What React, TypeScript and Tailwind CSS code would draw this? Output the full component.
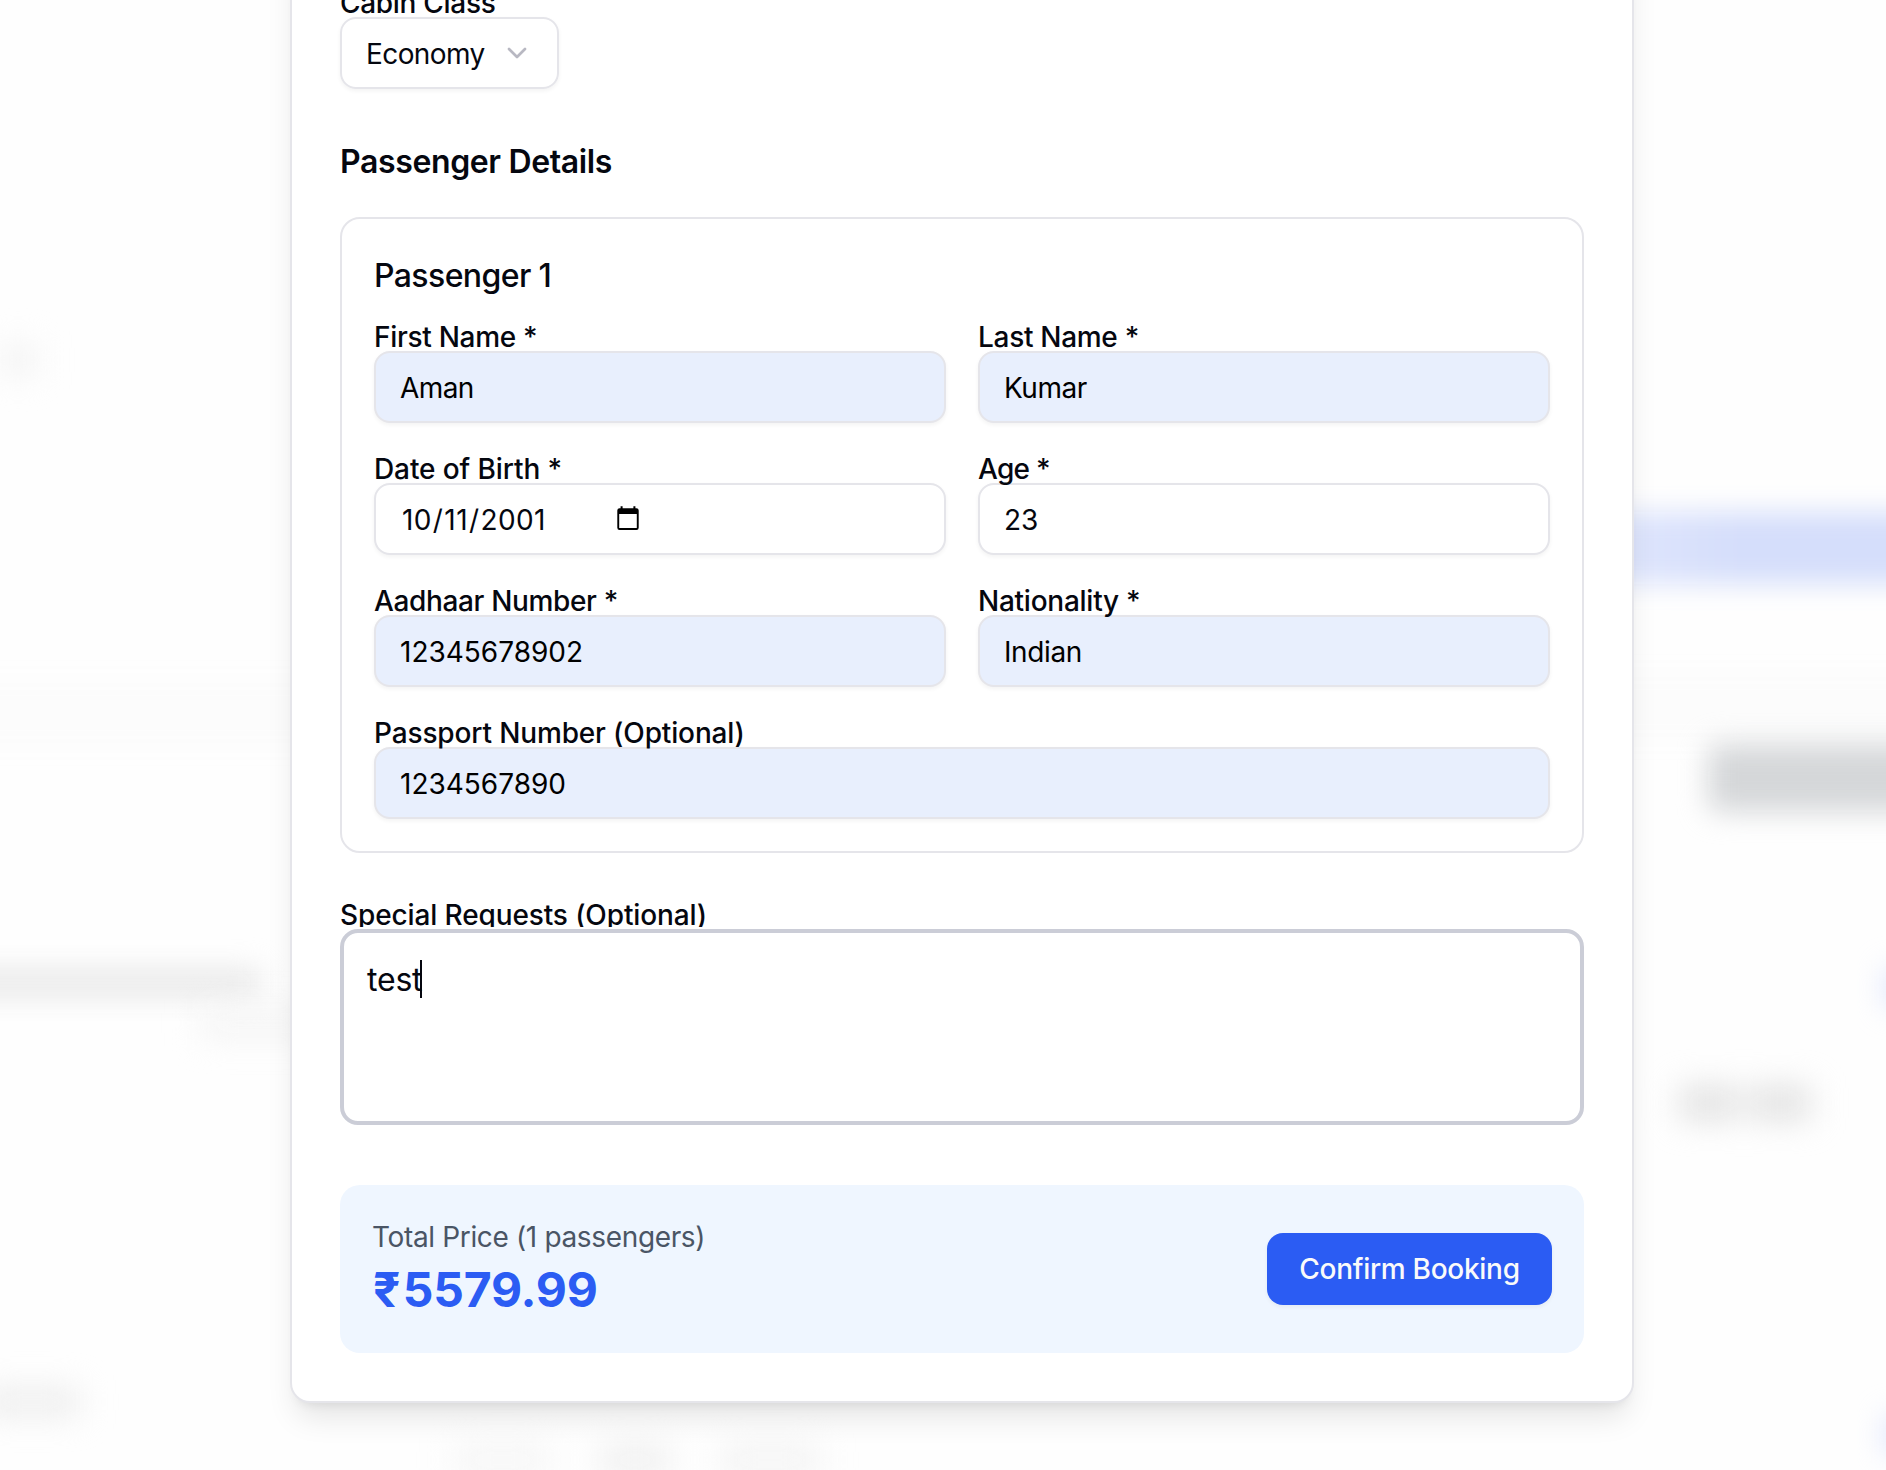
import { ChevronDown } from "lucide-react";
import type { ReactNode } from "react";

function Label({ tracking = "tracking-[-0.3px]", children }: { tracking?: string; children: ReactNode }) {
  return <div className={"h-7 whitespace-nowrap text-[28px] leading-7 font-medium " + tracking}>{children}</div>;
}

function Field({
  label,
  labelTracking,
  tracking = "",
  filled = false,
  wide = false,
  children,
}: {
  label: string;
  labelTracking?: string;
  tracking?: string;
  filled?: boolean;
  wide?: boolean;
  children: ReactNode;
}) {
  return (
    <div className={wide ? "col-span-2" : ""}>
      <Label tracking={labelTracking}>{label}</Label>
      <div
        className={
          "flex h-18 items-center rounded-2xl border-2 border-[#e5e5ea] px-6 pt-0.5 text-[28px] leading-10 shadow-[0_2px_4px_rgb(0_0_0/0.05)] " +
          (filled ? "bg-[#e8effd] text-black " : "bg-white ") +
          tracking
        }
      >
        {children}
      </div>
    </div>
  );
}

function CalendarIcon() {
  return (
    <svg viewBox="0 0 24 24" className="-mt-1 h-6 w-6" fill="none">
      <path
        fill="#000"
        fillRule="evenodd"
        d="M4.600 .3h2v1.900h10.800V.3h2v1.900h1.100a2.200 2.200 0 0 1 2.200 2.200v17.400a2.200 2.200 0 0 1-2.200 2.200H3.500a2.200 2.200 0 0 1-2.200-2.200V4.400a2.200 2.200 0 0 1 2.200-2.200h1.100zM3.200 8v14h17.600V8z"
      />
    </svg>
  );
}

/* Out-of-focus page behind the dialog */
function Backdrop() {
  return (
    <div aria-hidden className="absolute inset-0 flex justify-between overflow-hidden bg-[#fefefe]">
      <div className="w-[900px]">
        <div className="mt-[346px] h-7 w-9 bg-[#f2f2f2] blur-[16px]" />
        <div className="-ml-10 mt-[304px] h-[70px] w-[440px] bg-[#fcfcfc] blur-[8px]" />
        <div className="-ml-10 mt-[222px] h-[26px] w-[300px] bg-[#e7e7e7] blur-[14px]" />
        <div className="ml-[200px] mt-[14px] h-[26px] w-[120px] bg-[#f4f4f4] blur-[16px]" />
        <div className="-ml-4 mt-[354px] h-6 w-[96px] bg-[#ebebeb] blur-[16px]" />
        <div className="ml-[455px] mt-[34px] flex gap-[50px] blur-[16px]">
          <div className="h-6 w-[95px] bg-[#f4f4f4]" />
          <div className="h-6 w-[70px] bg-[#ececec]" />
          <div className="h-6 w-[100px] bg-[#f1f1f1]" />
        </div>
      </div>
      <div className="w-[286px]">
        <div className="-ml-10 mt-[512px] h-[72px] w-[400px] bg-gradient-to-r from-[#dde4fc] from-20% to-[#d5defb] to-45% blur-[13px]" />
        <div className="-ml-10 mt-[88px] h-[70px] w-[400px] bg-[#fcfcfc] blur-[8px]" />
        <div className="ml-[108px] mt-0.5 h-[68px] w-[240px] rounded-xl bg-[#d5d7d9] blur-[14px]" />
        <div className="ml-[286px] mt-[158px] h-[36px] w-[40px] bg-[#dbe2fc] blur-[15px]" />
        <div className="ml-[80px] mt-[81px] flex gap-3 blur-[16px]">
          <div className="h-[32px] w-[58px] bg-[#e0e0e0]" />
          <div className="h-[32px] w-[60px] bg-[#e0e0e0]" />
        </div>
        <div className="ml-[286px] mt-[298px] h-[36px] w-[40px] bg-[#dbe2fc] blur-[15px]" />
      </div>
    </div>
  );
}

export default function App() {
  return (
    <div className="relative h-[1470px] w-[1886px] overflow-hidden bg-white font-['Inter',sans-serif] text-[#05070f]">
      <Backdrop />
      <main className="relative -mt-[60px] ml-[290px] h-[1463px] w-[1344px] rounded-[20px] border-2 border-[#e5e5ea] bg-white px-12 pt-[47px] shadow-[0_20px_30px_-6px_rgb(0_0_0/0.1),0_8px_12px_-8px_rgb(0_0_0/0.1)]">
        <Label>Cabin Class</Label>
        <div className="flex h-18 w-[219px] items-center justify-between rounded-2xl border-2 border-[#e5e5ea] px-6 text-[28px] leading-10 shadow-[0_2px_4px_rgb(0_0_0/0.05)]">
          <span className="pt-0.5 tracking-[-0.6px]">Economy</span>
          <ChevronDown size={32} strokeWidth={2} className="text-[#b8b8c2]" />
        </div>

        <h3 className="mt-12 pt-px text-[32px] leading-[48px] font-semibold tracking-[-0.37px]">Passenger Details</h3>

        <section className="mt-[31px] rounded-[20px] border-2 border-[#e5e5ea] p-8">
          <h4 className="mb-[23px] pt-px text-[32px] leading-[48px] font-medium tracking-[-0.6px]">Passenger 1</h4>
          <div className="grid grid-cols-2 gap-8">
            <Field label="First Name *" filled tracking="tracking-[-0.6px]">Aman</Field>
            <Field label="Last Name *" filled tracking="tracking-[-0.5px]">Kumar</Field>
            <Field label="Date of Birth *" labelTracking="tracking-[-0.1px]" tracking="tracking-[0.4px]">
              <span className="flex w-[216px] pl-0.5">
                <span className="pr-px">10</span>/<span className="px-px">11</span>/<span className="pl-px">2001</span>
              </span>
              <CalendarIcon />
            </Field>
            <Field label="Age *" labelTracking="tracking-[-0.7px]">23</Field>
            <Field label="Aadhaar Number *" labelTracking="tracking-[-0.35px]" filled>12345678902</Field>
            <Field label="Nationality *" labelTracking="tracking-[-0.25px]" filled tracking="tracking-[-0.4px]">Indian</Field>
            <Field label="Passport Number (Optional)" labelTracking="tracking-[-0.14px]" filled wide>
              1234567890
            </Field>
          </div>
        </section>

        <div className="mt-12">
          <Label tracking="tracking-[-0.12px]">Special Requests (Optional)</Label>
          <div className="relative flex h-[196px] items-start rounded-[18px] border-4 border-[#cbcdd7] bg-white px-[22px] pt-[23px] text-[32px] leading-[48px] shadow-[0_0_0_2px_#fff]">
            <span className="pl-px tracking-[-0.2px]">test</span>
            <span className="-ml-0.5 mt-1 h-[38px] w-0.5 bg-[#05070f]" />
          </div>
        </div>

        <div className="mt-[60px] flex h-[168px] items-center justify-between rounded-[20px] bg-[#eff6ff] p-8">
          <div>
            <p className="text-[28px] leading-10 tracking-[-0.35px] text-[#4a5565]">Total Price (1 passengers)</p>
            <p className="-mb-px pl-px pt-px text-[48px] leading-[64px] font-bold tracking-[-0.2px] text-[#2b5cf3]">
              <span className="tracking-[2.4px]">₹</span>5579.99
            </p>
          </div>
          <button className="h-18 w-[285px] rounded-2xl bg-[#2b5cf3] text-[28px] leading-10 font-medium tracking-[-0.28px] whitespace-nowrap text-[#fafafa] shadow-[0_2px_4px_rgb(0_0_0/0.05)]">
            Confirm Booking
          </button>
        </div>
      </main>
    </div>
  );
}
